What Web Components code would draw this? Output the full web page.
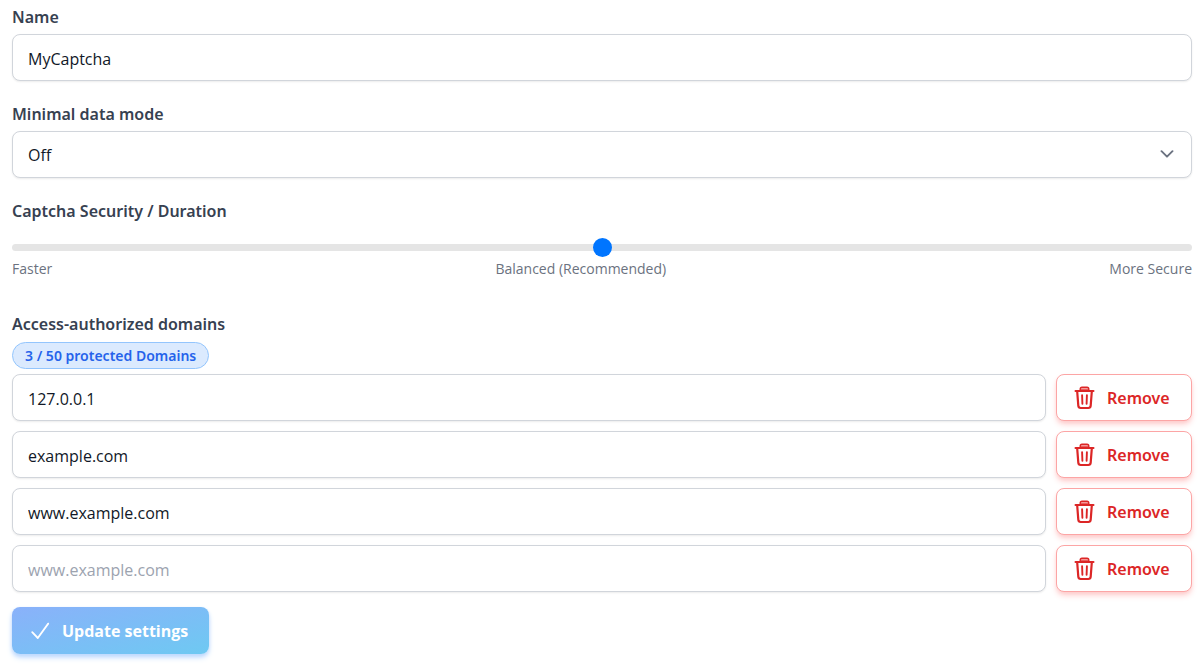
<!DOCTYPE html>
<html lang="en">
<head>
<meta charset="utf-8">
<meta name="viewport" content="width=device-width, initial-scale=1">
<title>Captcha settings</title>
<style>
  body { margin: 0; background: #fff; font-family: "Segoe UI", "Open Sans", "Noto Sans", sans-serif; }
</style>
</head>
<body>
<captcha-settings></captcha-settings>

<script>
const controlStyles = `
  *, *::before, *::after { box-sizing: border-box; }
  label { display: block; width: fit-content; font-family: "Segoe UI", "Noto Sans", sans-serif; font-size: 16px; line-height: 27px; font-weight: 600; color: #374151; }
  .control {
    display: block; width: 100%; height: 47px; margin: 0; padding: 2px 15px 0;
    border: 1px solid #d1d5db; border-radius: 8px; background: #fff; color: #111827;
    font: 400 16px/27px "Segoe UI", "Open Sans", "Noto Sans", sans-serif;
    box-shadow: 0 1px 2px rgb(0 0 0 / 8%); outline: none;
  }
  .control:focus-visible { border-color: #3b82f6; }
  .control::placeholder { color: #9ca3af; opacity: 1; }
`;

function define(name, render) {
  customElements.define(name, class extends HTMLElement {
    connectedCallback() {
      if (this.shadowRoot) return;
      this.attachShadow({ mode: "open" }).innerHTML = render(this);
    }
  });
}
const attr = (el, name) => el.getAttribute(name) || "";

define("text-field", el => `
  <style>${controlStyles}
    :host { display: flex; flex-direction: column; gap: 3px; }
  </style>
  <label for="control">${attr(el, "label")}</label>
  <input class="control" id="control" type="text" value="${attr(el, "value")}">`);

define("select-field", el => `
  <style>${controlStyles}
    :host { display: flex; flex-direction: column; gap: 3px; }
    .wrap { display: grid; align-items: center; }
    .wrap > * { grid-area: 1 / 1; }
    select { appearance: none; }
    svg { justify-self: end; width: 14px; height: 8px; margin: 0 18px 2px 0; pointer-events: none; }
  </style>
  <label for="control">${attr(el, "label")}</label>
  <div class="wrap">
    <select class="control" id="control"><option selected>Off</option><option>On</option></select>
    <svg viewBox="0 0 14 8" fill="none" stroke="#6b7280" stroke-width="1.9" stroke-linecap="round" stroke-linejoin="round" aria-hidden="true"><path d="M1.5 1.2 7 6.7l5.5-5.5"/></svg>
  </div>`);

define("range-field", el => `
  <style>${controlStyles}
    :host { display: block; }
    input { appearance: none; display: block; width: 100%; height: 19px; margin: 13px 0 0; background: none; outline: none; }
    input::-webkit-slider-runnable-track { height: 7px; border-radius: 4px; background: #e5e5e5; }
    input::-webkit-slider-thumb { appearance: none; width: 19px; height: 19px; margin-top: -6px; border-radius: 50%; background: #0075ff; }
    .scale { display: flex; justify-content: space-between; font-size: 14px; line-height: 24px; color: #6b7280; }
  </style>
  <label for="control">${attr(el, "label")}</label>
  <input id="control" type="range" min="0" max="2" value="1">
  <div class="scale"><slot></slot></div>`);

define("count-badge", () => `
  <style>
    :host { display: block; width: fit-content; padding: 0 12px; border: 1px solid #93c5fd; border-radius: 14px;
      background: #dbeafe; color: #2563eb; font-family: "Segoe UI", "Noto Sans", sans-serif; font-size: 14px; line-height: 25px; font-weight: 600; }
  </style>
  <slot></slot>`);

define("domain-row", el => `
  <style>${controlStyles}
    :host { display: flex; gap: 10px; }
    .control { flex: 1; min-width: 0; }
    button { flex: none; display: flex; align-items: center; width: 136px; height: 47px; margin: 0; padding: 0 17px; gap: 12px;
      border: 1px solid #fca5a5; border-radius: 8px; background: #fff; color: #dc2626; cursor: pointer;
      font: 600 16px/27px "Segoe UI", "Noto Sans", sans-serif;
      box-shadow: 0 4px 6px -1px #fecaca, 0 2px 4px -2px #fecaca; }
    svg { flex: none; width: 21px; height: 24px; }
    span { padding-top: 2px; }
  </style>
  <input class="control" type="text" aria-label="Domain" value="${attr(el, "value")}" placeholder="www.example.com">
  <button type="button">
    <svg viewBox="0 0 21 24" fill="none" stroke="#dc2626" stroke-linecap="round" stroke-linejoin="round" aria-hidden="true">
      <path d="M6.2 4.3V3.2Q6.2 1.3 8 1.3h5q1.8 0 1.8 1.9v1.1Z" fill="#f59a9a" stroke-width="1.4"/>
      <path d="M1.5 5h18" stroke-width="2"/>
      <path d="M3.2 5.5 4.3 19.7q.2 2.3 2.4 2.3h7.6q2.2 0 2.4-2.3L17.8 5.5" stroke-width="2.2"/>
      <path d="M8.1 9.2l.3 8.6M12.9 9.2l-.3 8.6" stroke-width="1.9"/>
    </svg>
    <span>Remove</span>
  </button>`);

define("submit-button", () => `
  <style>
    :host { display: block; width: fit-content; }
    button { box-sizing: border-box; display: flex; align-items: center; gap: 12px; height: 47px; margin: 0; padding: 0 21px 0 18px;
      border: 0; border-radius: 8px; color: #fff; cursor: pointer;
      background: linear-gradient(to bottom right, #8ab1fa, #6ec9f2);
      font: 700 16px/27px "Segoe UI", "Open Sans", "Noto Sans", sans-serif;
      box-shadow: 0 4px 6px -1px #bfdbfe, 0 2px 4px -1px #a9c8fb; }
    svg { flex: none; width: 20px; height: 20px; }
    span { padding-top: 2px; }
  </style>
  <button type="submit">
    <svg viewBox="0 0 20 20" fill="none" stroke="#fff" stroke-width="1.8" stroke-linecap="round" stroke-linejoin="round" aria-hidden="true"><path d="M2.2 11.2 7.8 17 18.2 2.6"/></svg>
    <span><slot></slot></span>
  </button>`);

define("captcha-settings", () => `
  <style>
    :host { display: block; padding: 4px 11px 12px 12px; }
    form { display: flex; flex-direction: column; gap: 20px; margin: 0; }
    .domains { display: flex; flex-direction: column; gap: 10px; margin: 10px 0 0; }
    .head { display: flex; flex-direction: column; gap: 4px; margin-bottom: -5px; }
    h2 { margin: 0; font-family: "Segoe UI", "Noto Sans", sans-serif; font-size: 16px; line-height: 27px; font-weight: 600; color: #374151; }
    submit-button { margin-top: -5px; }
  </style>
  <form onsubmit="return false">
    <text-field label="Name" value="MyCaptcha"></text-field>
    <select-field label="Minimal data mode"></select-field>
    <range-field label="Captcha Security / Duration">
      <span>Faster</span><span>Balanced (Recommended)</span><span>More Secure</span>
    </range-field>
    <section class="domains">
      <div class="head">
        <h2>Access-authorized domains</h2>
        <count-badge>3 / 50 protected Domains</count-badge>
      </div>
      <domain-row value="127.0.0.1"></domain-row>
      <domain-row value="example.com"></domain-row>
      <domain-row value="www.example.com"></domain-row>
      <domain-row></domain-row>
    </section>
    <submit-button>Update settings</submit-button>
  </form>`);
</script>
</body>
</html>
